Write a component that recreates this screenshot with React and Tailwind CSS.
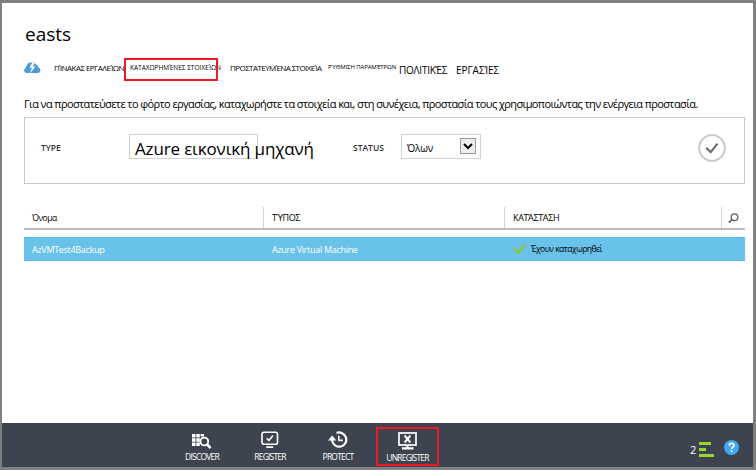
import React from "react";

const tabs = [
  { label: "ΠΊΝΑΚΑΣ ΕΡΓΑΛΕΊΩΝ", cls: "w-[76px] text-[8px] tracking-[-0.55px] pt-[3px]" },
  { label: "ΚΑΤΑΧΩΡΗΜΈΝΕΣ ΣΤΟΙΧΕΊΩΝ", cls: "w-[100px] text-[6.5px] tracking-[0px] pt-[3px]", active: true },
  { label: "ΠΡΟΣΤΑΤΕΥΜΈΝΑ ΣΤΟΙΧΕΊΑ", cls: "w-[98px] text-[8px] tracking-[-0.57px] pt-[3px]" },
  { label: "ΡΎΘΜΙΣΗ ΠΑΡΑΜΈΤΡΩΝ", cls: "w-[71px] text-[6px] tracking-[-0.1px] pt-[3px]" },
  { label: "ΠΟΛΙΤΙΚΈΣ", cls: "w-[57px] text-[10px] tracking-[-0.25px] pt-[6px]" },
  { label: "ΕΡΓΑΣΊΕΣ", cls: "w-[60px] text-[10px] tracking-[-0.05px] pt-[6px]" },
];

function Cloud() {
  return (
    <svg width="17" height="12" viewBox="0 0 17 12" className="block">
      <path d="M2.800 11A2.700 2.700 0 0 1 1.600 5.900 3 3 0 0 1 3 3.500 3.800 3.800 0 0 1 7 .4 4.500 4.500 0 0 1 12 2.500 3.500 3.500 0 0 1 14.400 5.500 2.800 2.800 0 0 1 13.800 11Z" fill="#4a9bd9" />
      <path d="M8.500 0 5.600 5.800H8L5.800 11.500 11.500 4.600H8.700L10.500 1Z" fill="#fff" />
    </svg>
  );
}

function DiscoverIcon() {
  return (
    <svg width="20" height="16" viewBox="0 0 20 16" className="block">
      <path d="M0 1h3.500v3.500H0zM4.300 1h3.500v3.500H4.300zM8.600 1h3.500v2.500H8.600zM0 5.300h3.500v3.500H0zM4.300 5.300h3.500v3.500H4.300zM0 9.600h3.500v3.500H0zM4.300 9.600h3.500v3.500H4.300z" fill="#fff" />
      <circle cx="12.300" cy="8.500" r="3.900" fill="#3d444f" stroke="#fff" strokeWidth="1.900" />
      <path d="m15 11.300 3.600 3.700" stroke="#fff" strokeWidth="2.600" />
    </svg>
  );
}

function RegisterIcon() {
  return (
    <svg width="18" height="18" viewBox="0 0 18 18" className="block" fill="none" stroke="#fff">
      <rect x="1" y="1.200" width="15.500" height="12" rx="2" strokeWidth="1.600" />
      <path d="m5.700 7.200 2.200 2.300 4-5" strokeWidth="1.500" />
      <path d="M5.200 16.100h7" strokeWidth="1.700" />
    </svg>
  );
}

function ProtectIcon() {
  return (
    <svg width="20" height="18" viewBox="0 0 20 18" className="block" fill="none" stroke="#fff">
      <path d="M8.500 2A7.100 7.100 0 1 1 4.200 10V7" strokeWidth="2.200" />
      <path d="M0 9.500 4.200 4.500 8.400 9.500Z" fill="#fff" stroke="none" />
      <path d="M10.800 4.700v4.700h4" strokeWidth="1.600" />
    </svg>
  );
}

function UnregisterIcon() {
  return (
    <svg width="20" height="18" viewBox="0 0 20 18" className="block" fill="none" stroke="#fff">
      <rect x="1" y="1" width="17" height="12" strokeWidth="1.700" />
      <path d="m6.600 3.500 5.800 7M12.400 3.500l-5.800 7" strokeWidth="2" />
      <path d="M9.500 13v3M4 16.300h11.500" strokeWidth="2.200" />
    </svg>
  );
}

function Command({ label, icon, cls }) {
  return (
    <div className={"flex flex-col items-center " + cls}>
      <div className="flex h-[20px] items-end">{icon}</div>
      <span className="mt-[2px] text-[8.5px] leading-[11px] tracking-[-0.8px] whitespace-nowrap text-white">{label}</span>
    </div>
  );
}

export default function App() {
  return (
    <div className="flex h-[470px] w-[756px] flex-col overflow-hidden border-t-[3px] border-r-[3px] border-b-[3px] border-l-2 border-[#808080] bg-white font-['Open_Sans','Noto_Sans',sans-serif] text-black">
      <main className="flex flex-1 flex-col pr-[8px] pl-[22px]">
        <h1 className="mt-[18px] h-[26px] text-[19px] leading-[26px]">
          <span className="ml-px">easts</span>
        </h1>

        <nav className="mt-[10px] flex h-[26px]">
          <div className="w-[30px] pt-[5px]"><Cloud /></div>
          {tabs.map((t) => (
            <div key={t.label} className={"relative shrink-0 leading-[15px] whitespace-nowrap " + t.cls}>
              {t.label}
              {t.active && <span className="absolute top-[1px] -left-[6px] h-[23px] w-[94px] border-2 border-[#ed1c24]" />}
            </div>
          ))}
        </nav>

        <p className="mt-[12px] h-[18px] text-[11px] leading-[18px] tracking-[-0.605px] whitespace-nowrap">
          Για να προστατεύσετε το φόρτο εργασίας, καταχωρήστε τα στοιχεία και, στη συνέχεια, προστασία τους χρησιμοποιώντας την ενέργεια προστασία.
        </p>

        <section className="mt-[4px] flex h-[67px] w-[721px] shrink-0 items-center border border-[#c8c8c8] pr-[18px] pb-[5px] pl-[16px]">
          <span className="w-[88px] text-[8.5px] font-semibold text-[#333]">TYPE</span>
          <div className="mb-[3px] h-[25px] w-[129px] border border-[#d2d2d2] pl-[5px] text-[17px] leading-[28px] tracking-[-0.15px] whitespace-nowrap">
            Azure εικονική μηχανή
          </div>
          <span className="ml-[95px] w-[48px] text-[8.5px] font-semibold text-[#333]">STATUS</span>
          <div className="mb-[3px] flex h-[25px] w-[80px] items-center justify-between border border-[#d2d2d2] pr-[4px] pl-[5px]">
            <span className="pt-[4px] text-[10px] tracking-[-0.2px]">Όλων</span>
            <span className="mb-[1px] flex h-[16px] w-[16px] items-center justify-center border border-[#999] bg-[#eee]">
              <svg width="10" height="7" viewBox="0 0 10 7"><path d="m1 1 4 4 4-4" fill="none" stroke="#000" strokeWidth="2" /></svg>
            </span>
          </div>
          <svg width="28" height="28" viewBox="0 0 28 28" className="ml-auto" fill="none">
            <circle cx="14" cy="14" r="12.800" stroke="#c4c4c4" strokeWidth="1.800" />
            <path d="m8.200 13.800 4.500 4.300 6.800-8.500" stroke="#707070" strokeWidth="2.300" />
          </svg>
        </section>

        <div className="mt-[23px] flex h-[23px] w-[721px] shrink-0 border-b-2 border-[#bebebe] text-[9px]">
          <div className="w-[239px] pl-[8px] text-[8.5px] leading-[22px] tracking-[-0.5px]">Όνομα</div>
          <div className="w-[241px] border-l border-[#d4d4d4] pl-[8px] leading-[22px] tracking-[-0.4px]">ΤΎΠΟΣ</div>
          <div className="w-[217px] border-l border-[#d4d4d4] pl-[8px] leading-[22px] tracking-[-0.35px]">ΚΑΤΆΣΤΑΣΗ</div>
          <div className="flex-1 border-l border-[#d4d4d4] pt-[6px] pl-[6px]">
            <svg width="11" height="11" viewBox="0 0 11 11" fill="none" stroke="#666">
              <circle cx="6.500" cy="4.200" r="3.300" strokeWidth="1.400" />
              <path d="M4 6.600.8 9.700" strokeWidth="1.800" />
            </svg>
          </div>
        </div>

        <div className="mt-[7px] flex h-[24px] w-[721px] shrink-0 items-center border-y border-[#5bbbe8] bg-[#69c2e9] text-[9px] tracking-[-0.3px] text-white">
          <span className="w-[248px] pt-[2px] pl-[8px]">AzVMTest4Backup</span>
          <span className="w-[241px] pt-[2px]">Azure Virtual Machine</span>
          <svg width="13" height="12" viewBox="0 0 13 12"><path d="m1 5.600 4 4L11.500 1.800" fill="none" stroke="#8cc63f" strokeWidth="2.700" /></svg>
          <span className="pl-[5px] text-[8.5px] tracking-[-0.5px] text-black">Έχουν καταχωρηθεί</span>
        </div>
      </main>

      <footer className="flex h-[44px] shrink-0 bg-[#3d444f] pl-[166px]">
        <Command label="DISCOVER" icon={<DiscoverIcon />} cls="w-[68px] pt-[6px]" />
        <Command label="REGISTER" icon={<RegisterIcon />} cls="w-[68px] pt-[6px]" />
        <Command label="PROTECT" icon={<ProtectIcon />} cls="w-[68px] pt-[6px]" />
        <div className="mt-[4px] ml-[4px] h-[39px] w-[63px] border-2 border-[#ed1c24]">
          <Command label="UNREGISTER" icon={<UnregisterIcon />} cls="pt-[1px]" />
        </div>
        <div className="mt-[19px] ml-auto flex w-[63px] text-white">
          <span className="w-[9px] text-[11px] leading-[16px]">2</span>
          <svg width="15" height="15" viewBox="0 0 15 15"><path d="M0 0h12v3H0zM0 6h7v3H0zM0 12h15v3H0z" fill="#97d52f" /></svg>
          <svg width="15" height="15" viewBox="0 0 15 15" className="-mt-[2px] ml-[10px]"><circle cx="7.500" cy="7.500" r="7.500" fill="#3fa9f5" /><path d="M5.200 5.600c.1-3 4.800-2.900 4.800-.2 0 1.600-2.300 1.700-2.300 3.500M7.700 10.300v1.800" fill="none" stroke="#fff" strokeWidth="1.700" /></svg>
        </div>
      </footer>
    </div>
  );
}
